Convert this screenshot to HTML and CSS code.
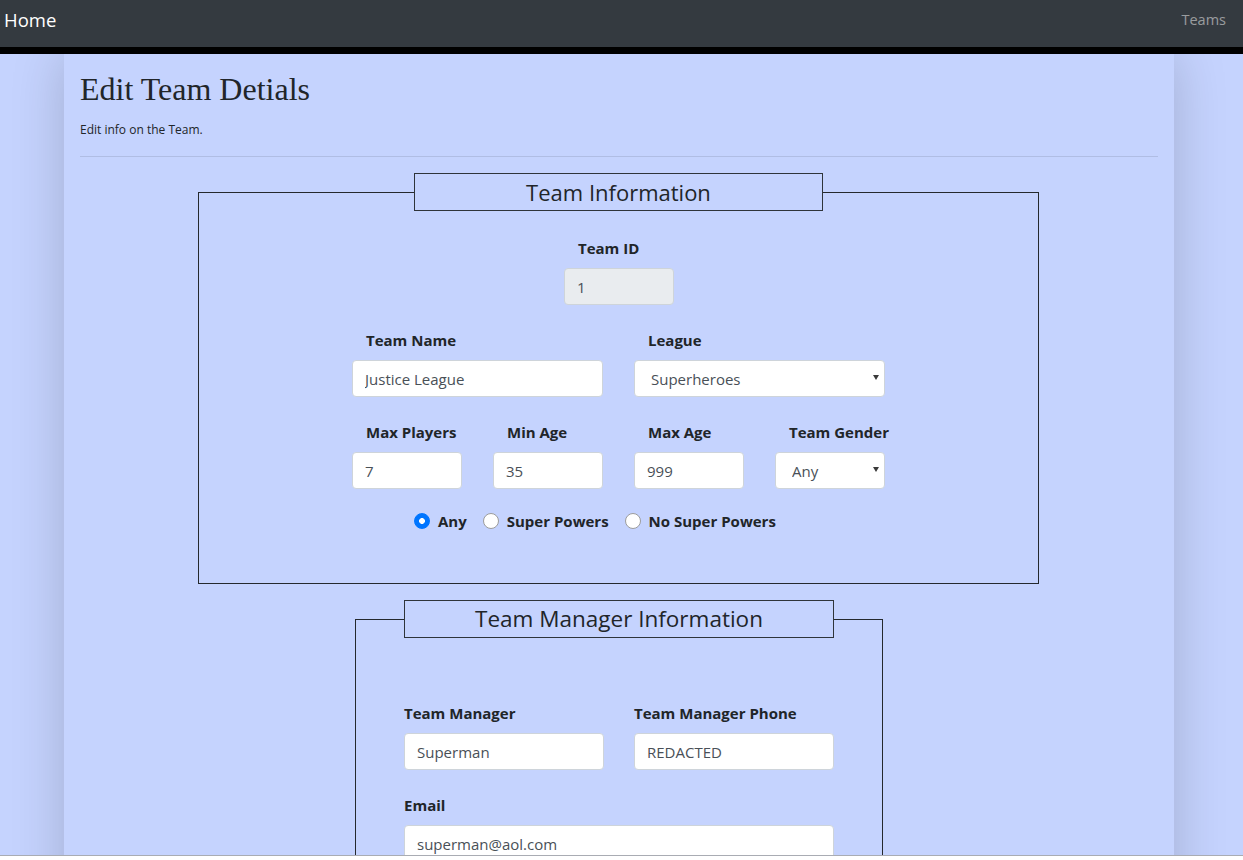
FILE: index.html
```html
<!DOCTYPE html>
<html lang="en">
<head>
<meta charset="utf-8">
<title>Edit Team Detials</title>
<link rel="stylesheet" href="styles.css">
</head>
<body>
<div class="viewport">
  <nav class="navbar">
    <a class="brand" href="#">Home</a>
    <a class="nav-link" href="#">Teams</a>
  </nav>
  <div class="band"></div>
  <main class="container">
    <h1 class="title">Edit Team Detials</h1>
    <p class="subtitle">Edit info on the Team.</p>
    <hr class="rule">
    <form class="form">
      <fieldset class="fs fs-team">
        <legend class="legend legend-team">Team Information</legend>
        <div class="fs-body fs-body-team">
          <div class="row row-center">
            <div class="group group-id">
              <label class="label">Team ID</label>
              <input class="control" type="text" value="1" disabled>
            </div>
          </div>
          <div class="row cols-2">
            <div class="group">
              <label class="label">Team Name</label>
              <input class="control" type="text" value="Justice League">
            </div>
            <div class="group">
              <label class="label">League</label>
              <div class="select-wrap">
                <select class="control select"><option>Superheroes</option></select>
              </div>
            </div>
          </div>
          <div class="row cols-4 row-last">
            <div class="group">
              <label class="label">Max Players</label>
              <input class="control" type="text" value="7">
            </div>
            <div class="group">
              <label class="label">Min Age</label>
              <input class="control" type="text" value="35">
            </div>
            <div class="group">
              <label class="label">Max Age</label>
              <input class="control" type="text" value="999">
            </div>
            <div class="group">
              <label class="label">Team Gender</label>
              <div class="select-wrap">
                <select class="control select"><option>Any</option></select>
              </div>
            </div>
          </div>
          <div class="radios">
            <label class="radio-item"><input class="radio" type="radio" name="powers" checked><span>Any</span></label>
            <label class="radio-item"><input class="radio" type="radio" name="powers"><span>Super Powers</span></label>
            <label class="radio-item"><input class="radio" type="radio" name="powers"><span>No Super Powers</span></label>
          </div>
        </div>
      </fieldset>

      <fieldset class="fs fs-manager">
        <legend class="legend legend-manager">Team Manager Information</legend>
        <div class="fs-body fs-body-manager">
          <div class="row cols-2 cols-2-tight">
            <div class="group">
              <label class="label label-flush">Team Manager</label>
              <input class="control" type="text" value="Superman">
            </div>
            <div class="group">
              <label class="label label-flush">Team Manager Phone</label>
              <input class="control" type="text" value="REDACTED">
            </div>
          </div>
          <div class="row">
            <div class="group">
              <label class="label label-flush">Email</label>
              <input class="control" type="text" value="superman@aol.com">
            </div>
          </div>
        </div>
      </fieldset>
    </form>
  </main>
</div>
</body>
</html>
```

FILE: styles.css
```css
html, body {
  margin: 0;
  padding: 0;
  background: #ffffff;
}

body {
  font-family: "Open Sans", "Noto Sans", "DejaVu Sans", sans-serif;
  color: #212529;
}

.viewport {
  height: 855px;
  overflow: hidden;
  background: #c5d3fe;
  border-bottom: 1px solid #a9acb3;
  display: flex;
  flex-direction: column;
}

.navbar {
  position: relative;
  z-index: 2;
  flex: 0 0 47px;
  height: 47px;
  box-sizing: border-box;
  background: #343a40;
  display: flex;
  align-items: center;
  justify-content: space-between;
  padding: 0 17px 8px 4px;
}

.brand {
  color: #ffffff;
  font-size: 18.5px;
  text-decoration: none;
}

.nav-link {
  color: rgba(255, 255, 255, 0.5);
  font-size: 14.5px;
  text-decoration: none;
}

.band {
  position: relative;
  z-index: 2;
  flex: 0 0 7px;
  background: #000000;
}

.container {
  flex: 1 0 auto;
  width: 1110px;
  box-sizing: border-box;
  margin-left: 64px;
  padding: 16px 16px 0;
  background: #c5d3fe;
  box-shadow: 0 0 50px 0 rgba(0, 0, 0, 0.18);
}

.title {
  font-family: "Liberation Serif", "Times New Roman", serif;
  font-weight: normal;
  font-size: 32px;
  line-height: 38.4px;
  margin: 0 0 13px;
  color: #212529;
}

.subtitle {
  font-size: 12px;
  line-height: 18px;
  margin: 0 0 17px;
}

.rule {
  margin: 0;
  border: 0;
  border-top: 1px solid rgba(0, 0, 0, 0.1);
}

.form {
  display: flex;
  flex-direction: column;
  align-items: flex-start;
}

.fs {
  box-sizing: border-box;
  margin: 16px 0 0;
  padding: 0;
  border: 1px solid #25292d;
  min-width: 0;
}

.fs-team {
  width: 841px;
  margin-left: 118px;
}

.fs-manager {
  width: 528px;
  margin-left: 275px;
  padding-bottom: 60px;
}

.legend {
  box-sizing: border-box;
  height: 38px;
  margin: 0 auto;
  padding: 0;
  border: 1px solid #2f343a;
  font-size: 22px;
  font-weight: 400;
  line-height: 36px;
  text-align: center;
  color: #212529;
}

.legend-team {
  width: 409px;
}

.legend-manager {
  width: 430px;
  font-size: 22.5px;
}

.fs-body-team {
  width: 533px;
  margin: 0 auto;
  padding: 26px 0 51px;
}

.fs-body-manager {
  padding: 64px 48px 0;
}

.row {
  margin-bottom: 24px;
}

.row-center {
  display: flex;
  justify-content: flex-start;
  padding-left: 212px;
}

.row-last {
  margin-bottom: 21px;
}

.cols-2 {
  display: grid;
  grid-template-columns: 1fr 1fr;
  column-gap: 31px;
}

.cols-2-tight {
  column-gap: 30px;
}

.cols-4 {
  display: grid;
  grid-template-columns: repeat(4, 1fr);
  column-gap: 31px;
}

.group {
  display: flex;
  flex-direction: column;
  min-width: 0;
}

.group-id {
  width: 110px;
}

.label {
  display: block;
  font-size: 15px;
  font-weight: 700;
  line-height: 22px;
  margin: 0 0 9px 14px;
  color: #212529;
  white-space: nowrap;
}

.label-flush {
  margin-left: 0;
}

.control {
  box-sizing: border-box;
  width: 100%;
  height: 37px;
  margin: 0;
  padding: 0 12px;
  border: 1px solid #ced4da;
  border-radius: 4px;
  background: #ffffff;
  font-family: "Open Sans", "Noto Sans", "DejaVu Sans", sans-serif;
  font-size: 15px;
  color: #495057;
  outline: none;
}

.control:disabled {
  background: #e9ecef;
  color: #495057;
}

.select-wrap {
  position: relative;
}

.select {
  appearance: none;
  -webkit-appearance: none;
  padding: 0 16px;
}

.select-wrap::after {
  content: "";
  position: absolute;
  right: 6px;
  top: 15px;
  width: 0;
  height: 0;
  border-left: 3.5px solid transparent;
  border-right: 3.5px solid transparent;
  border-top: 5px solid #3a3a3a;
  pointer-events: none;
}

.radios {
  display: flex;
  align-items: center;
  padding-left: 62px;
  height: 22px;
}

.radio-item {
  display: flex;
  align-items: center;
  gap: 8px;
  margin-right: 16px;
  font-size: 15px;
  font-weight: 700;
  line-height: 22px;
  color: #212529;
}

.radio {
  appearance: none;
  -webkit-appearance: none;
  box-sizing: border-box;
  width: 16px;
  height: 16px;
  margin: 0;
  border-radius: 50%;
  border: 1px solid #9c9c9c;
  background: #ffffff;
}

.radio:checked {
  border-color: #0075ff;
  background: radial-gradient(circle, #ffffff 0 2.6px, #0075ff 3.2px);
}
```
